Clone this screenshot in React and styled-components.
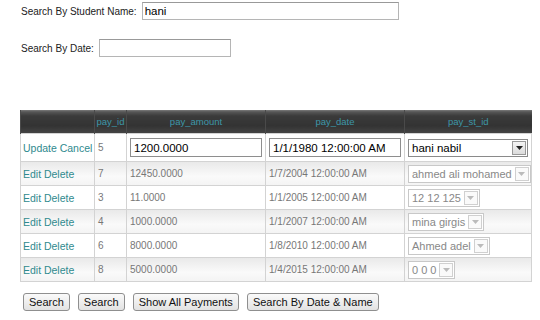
import React from "react";
import styled, { createGlobalStyle } from "styled-components";

const rows = [
  { id: 7, amount: "12450.0000", date: "1/7/2004 12:00:00 AM", st: "ahmed ali mohamed" },
  { id: 3, amount: "11.0000", date: "1/1/2005 12:00:00 AM", st: "12 12 125" },
  { id: 4, amount: "1000.0000", date: "1/1/2007 12:00:00 AM", st: "mina girgis" },
  { id: 6, amount: "8000.0000", date: "1/8/2010 12:00:00 AM", st: "Ahmed adel" },
  { id: 8, amount: "5000.0000", date: "1/4/2015 12:00:00 AM", st: "0 0 0" },
];

function FakeSelect({ value, active }) {
  return (
    <SelectBox active={active}>
      <SelectText active={active}>{value}</SelectText>
      <ArrowBox active={active}>
        <svg width="7" height="4" viewBox="0 0 7 4">
          <path d="M0 0 L7 0 L3.5 4 Z" fill={active ? "#222" : "#bbb"} />
        </svg>
      </ArrowBox>
    </SelectBox>
  );
}

function App() {
  return (
    <Page>
      <GlobalStyle />
      <FormRow>
        <Label>Search By Student Name:</Label>
        <TextInput w="257px" defaultValue="hani" />
      </FormRow>
      <FormRow top="19px">
        <Label>Search By Date:</Label>
        <TextInput w="132px" defaultValue="" />
      </FormRow>

      <Grid>
        <colgroup>
          <col style={{ width: 74 }} />
          <col style={{ width: 32 }} />
          <col style={{ width: 139 }} />
          <col style={{ width: 139 }} />
          <col />
        </colgroup>
        <thead>
          <tr>
            <Th></Th>
            <Th>pay_id</Th>
            <Th>pay_amount</Th>
            <Th>pay_date</Th>
            <Th>pay_st_id</Th>
          </tr>
        </thead>
        <tbody>
          <Tr h="28px">
            <LinkCell>
              <LinkText>Update</LinkText> <LinkText>Cancel</LinkText>
            </LinkCell>
            <Td>5</Td>
            <Td>
              <CellInput defaultValue="1200.0000" />
            </Td>
            <Td>
              <CellInput defaultValue="1/1/1980 12:00:00 AM" />
            </Td>
            <Td>
              <FakeSelect value="hani nabil" active />
            </Td>
          </Tr>
          {rows.map((r, i) => (
            <Tr key={r.id} h="24px" shade={i % 2 === 0}>
              <LinkCell>
                <LinkText>Edit</LinkText> <LinkText>Delete</LinkText>
              </LinkCell>
              <Td>{r.id}</Td>
              <Td>{r.amount}</Td>
              <Td>{r.date}</Td>
              <Td>
                <FakeSelect value={r.st} />
              </Td>
            </Tr>
          ))}
        </tbody>
      </Grid>

      <ButtonBar>
        <Btn>Search</Btn>
        <Btn>Search</Btn>
        <Btn>Show All Payments</Btn>
        <Btn>Search By Date &amp; Name</Btn>
      </ButtonBar>
    </Page>
  );
}

export default App;

const GlobalStyle = createGlobalStyle`
  body {
    margin: 0;
    background: #fff;
    font-family: "Liberation Sans", Arial, sans-serif;
  }
`;

const Page = styled.div`
  padding: 2px 0 0 20px;
`;

const FormRow = styled.div`
  display: flex;
  align-items: center;
  gap: 5px;
  height: 18px;
  padding-left: 1px;
  margin-top: ${({ top }) => top || "0"};
`;

const Label = styled.span`
  font-size: 10px;
  color: #222;
`;

const TextInput = styled.input`
  box-sizing: border-box;
  width: ${({ w }) => w};
  height: 18px;
  border: 1px solid #b5b5b5;
  border-top-color: #999;
  padding: 0 2px;
  font-family: "Liberation Sans", Arial, sans-serif;
  font-size: 11.5px;
  color: #000;
  outline: none;
`;

const Grid = styled.table`
  margin-top: 53px;
  width: 512px;
  table-layout: fixed;
  border-collapse: collapse;
  font-size: 10px;
  color: #777;
`;

const Th = styled.th`
  height: 23px;
  padding: 0;
  font-weight: normal;
  font-size: 9.5px;
  color: #3d96a8;
  border-left: 1px solid #4a4a4a;
  background: linear-gradient(#7a7a7a 0, #555 2px, #3a3a3a 6px, #333 16px, #444 100%);
`;

const Tr = styled.tr`
  height: ${({ h }) => h};
  background: ${({ shade }) =>
    shade ? "linear-gradient(#e9e9e9, #fafafa 60%, #f3f3f3)" : "#fff"};
`;

const Td = styled.td`
  border: 1px solid #d3d3d3;
  padding: 0 3px;
  white-space: nowrap;
  overflow: visible;
`;

const LinkCell = styled(Td)`
  padding: 0 2px;
`;

const LinkText = styled.span`
  color: #2f8a8e;
  font-size: 10.5px;
`;

const CellInput = styled.input`
  box-sizing: border-box;
  width: 132px;
  height: 19px;
  border: 1px solid #8e8e8e;
  padding: 0 3px;
  font-family: "Liberation Sans", Arial, sans-serif;
  font-size: 11.5px;
  color: #000;
  outline: none;
`;

const SelectBox = styled.span`
  display: inline-flex;
  align-items: center;
  box-sizing: border-box;
  height: 18px;
  width: ${({ active }) => (active ? "120px" : "auto")};
  border: 1px solid ${({ active }) => (active ? "#8a8a8a" : "#c8c8c8")};
  background: #fff;
  padding: 1px;
`;

const SelectText = styled.span`
  flex: 1;
  padding: 0 3px 0 2px;
  font-size: ${({ active }) => (active ? "11.5px" : "11px")};
  color: ${({ active }) => (active ? "#000" : "#888")};
`;

const ArrowBox = styled.span`
  display: inline-flex;
  align-items: center;
  justify-content: center;
  box-sizing: border-box;
  width: 14px;
  height: 14px;
  border: 1px solid ${({ active }) => (active ? "#999" : "#d0d0d0")};
  background: ${({ active }) => (active ? "linear-gradient(#f4f4f4, #dcdcdc)" : "#fafafa")};
`;

const ButtonBar = styled.div`
  display: flex;
  gap: 8px;
  margin: 11px 0 0 3px;
`;

const Btn = styled.button`
  height: 18px;
  padding: 0 5px;
  font-family: "Liberation Sans", Arial, sans-serif;
  font-size: 11px;
  color: #111;
  border: 1px solid #8f8f8f;
  border-radius: 3px;
  background: linear-gradient(#fafafa, #e2e2e2);
`;
